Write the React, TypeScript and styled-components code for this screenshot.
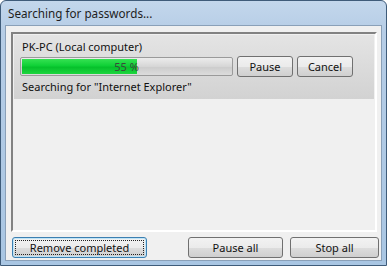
import React from "react";
import styled, { createGlobalStyle } from "styled-components";

const Global = createGlobalStyle`
  html, body { margin: 0; padding: 0; }
  body { width: 387px; height: 266px; overflow: hidden; font-family: "Noto Sans", "DejaVu Sans", sans-serif; }
`;

const Window = styled.div`
  width: 387px;
  height: 266px;
  box-sizing: border-box;
  background: linear-gradient(#c3d7ec, #b6cde6 30px, #a9c6e3);
  border: 1px solid #3f5c7a;
  border-radius: 6px 6px 0 0;
  padding: 0 4px 4px 4px;
  display: flex;
  flex-direction: column;
`;

const TitleBar = styled.div`
  height: 24px;
  display: flex;
  align-items: center;
  padding-left: 3px;
  font-size: 11.7px;
  color: #1e1e1e;
`;

const Client = styled.div`
  flex: 1;
  background: #f0f0f0;
  border: 1px solid #8aa0b8;
  display: flex;
  flex-direction: column;
  padding: 6px 2px 2px 5px;
  gap: 5px;
`;

const ListBox = styled.div`
  flex: 1;
  margin-right: 2px;
  border-top: 2px solid #828282;
  border-left: 2px solid #828282;
  border-right: 2px solid #ffffff;
  border-bottom: 2px solid #ffffff;
  background: #f0f0f0;
  padding: 1px;
`;

const Item = styled.div`
  background: linear-gradient(#e4e4e4, #d2d2d2);
  padding: 4px 8px 5px 6px;
  display: flex;
  flex-direction: column;
  gap: 2px;
  font-size: 11px;
  color: #111;
`;

const Label = styled.span`
  padding-left: 2px;
`;

const Row = styled.div`
  display: flex;
  align-items: center;
  gap: 4px;
`;

const Bar = styled.div`
  position: relative;
  width: 213px;
  height: 19px;
  box-sizing: border-box;
  border: 1px solid #9a9a9a;
  border-radius: 2px;
  background: linear-gradient(#ececec, #d6d6d6 50%, #cbcbcb 51%, #dcdcdc);
  padding: 1px;
`;

const Fill = styled.div`
  height: 100%;
  background: linear-gradient(#35e252, #0fd036 45%, #06c02b 55%, #1ed63f);
`;

const BarText = styled.span`
  position: absolute;
  left: 0;
  right: 0;
  top: 0;
  bottom: 0;
  display: flex;
  align-items: center;
  justify-content: center;
  font-size: 11px;
  color: #3a4a3a;
`;

const Button = styled.button<{ $w: number; $focus?: boolean }>`
  width: ${(p) => p.$w}px;
  height: 21px;
  box-sizing: border-box;
  border: 1px solid ${(p) => (p.$focus ? "#3c7fb1" : "#707070")};
  border-radius: 3px;
  background: linear-gradient(#f2f2f2, #ebebeb 50%, #dddddd 51%, #cfcfcf);
  font-family: inherit;
  font-size: 11px;
  color: #111;
  padding: 0;
  ${(p) => (p.$focus ? "box-shadow: inset 0 0 0 1px #bfe4f7; outline: 1px dotted #222; outline-offset: -4px;" : "")}
`;

const Footer = styled.div`
  display: flex;
  align-items: center;
  gap: 7px;
  padding-left: 1px;
`;

const Spacer = styled.div`
  flex: 1;
`;

export default function App() {
  return (
    <>
      <Global />
      <Window>
        <TitleBar>Searching for passwords...</TitleBar>
        <Client>
          <ListBox>
            <Item>
              <Label>PK-PC (Local computer)</Label>
              <Row>
                <Bar>
                  <Fill style={{ width: "55%" }} />
                  <BarText>55 %</BarText>
                </Bar>
                <Button $w={56}>Pause</Button>
                <Button $w={56}>Cancel</Button>
              </Row>
              <Label>Searching for "Internet Explorer"</Label>
            </Item>
          </ListBox>
          <Footer>
            <Button $w={135} $focus>Remove completed</Button>
            <Spacer />
            <Button $w={95}>Pause all</Button>
            <Button $w={89}>Stop all</Button>
          </Footer>
        </Client>
      </Window>
    </>
  );
}
